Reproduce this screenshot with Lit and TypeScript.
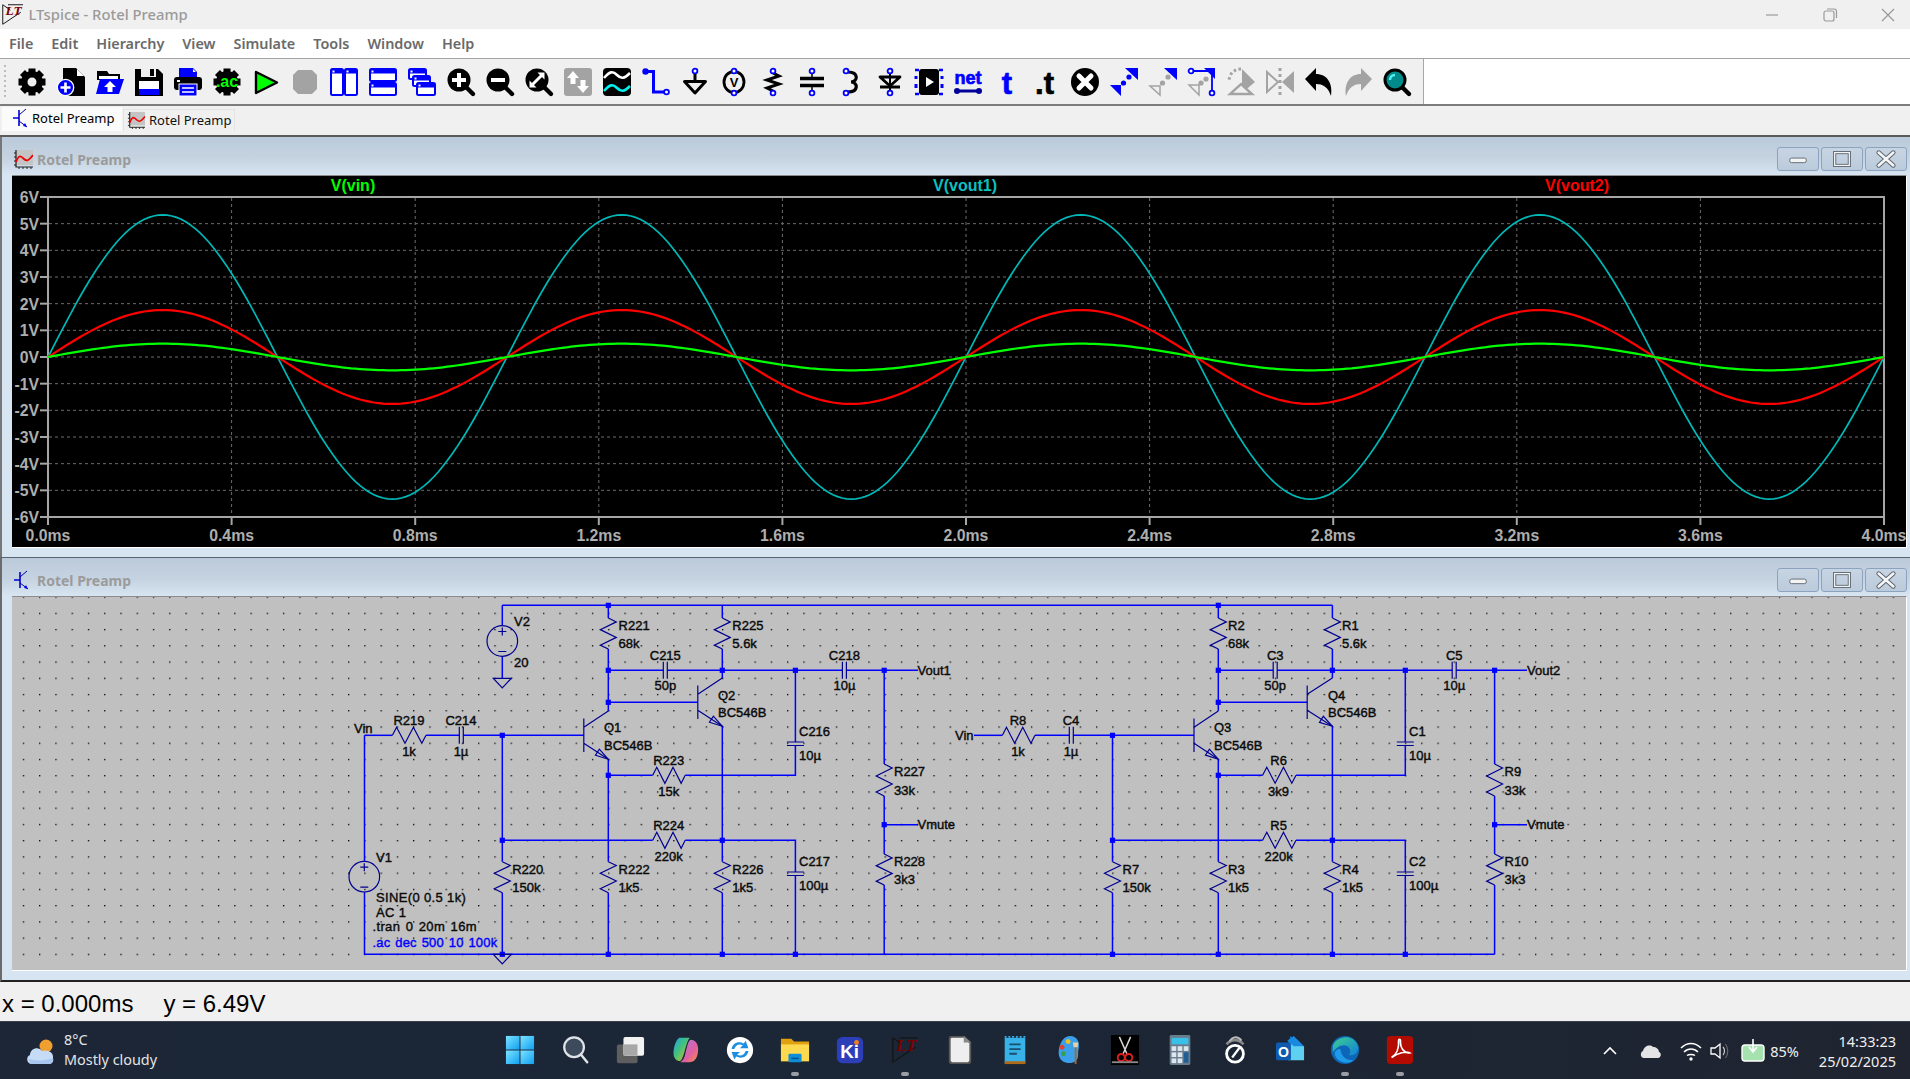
import { LitElement, html, css, svg } from "lit";
import { customElement } from "lit/decorators.js";

const K = "#000", B = "#0000ff", G = "#a3a3a3", BG = "#f0f0f0";

const gearShape = () => svg`
  ${[0, 45, 90, 135, 180, 225, 270, 315].map(a => svg`<rect x="10.5" y="0.5" width="7" height="6" fill="${K}" transform="rotate(${a} 14 14)"/>`)}
  <circle cx="14" cy="14" r="7.7" fill="none" stroke="${K}" stroke-width="6.4"/>`;
const gearSolid = () => svg`
  ${[0, 45, 90, 135, 180, 225, 270, 315].map(a => svg`<rect x="10.5" y="0.5" width="7" height="6" fill="${K}" transform="rotate(${a} 14 14)"/>`)}
  <circle cx="14" cy="14" r="11" fill="${K}"/>`;
const pin = (x: number, y: number) => svg`<circle cx="${x}" cy="${y}" r="2.4" fill="#fff" stroke="${B}" stroke-width="1.8"/>`;
const lens = (inner: unknown) => svg`
  <path d="M19 19L26 26" stroke="${K}" stroke-width="4.4" stroke-linecap="round"/>
  <circle cx="12" cy="12" r="11.5" fill="${K}"/>${inner}`;
const win = (x: number, y: number, w: number, h: number) => svg`
  <rect x="${x}" y="${y}" width="${w}" height="${h}" rx="1.5" fill="#fff" stroke="${B}" stroke-width="2"/>
  <rect x="${x}" y="${y}" width="${w}" height="4.5" fill="${B}"/>
  <rect x="${x + 1.5}" y="${y + 1.5}" width="2" height="2" fill="#fff"/>`;

const TOOLS: unknown[] = [
  gearShape(),
  svg`<path d="M6 0H19L28 9V28H6Z" fill="${K}"/><path d="M20 1L27 8H20Z" fill="#fff"/><circle cx="8.5" cy="19.5" r="8.2" fill="${B}" stroke="#fff" stroke-width="1.3"/><path d="M8.5 14.5V24.5M3.5 19.5H13.5" stroke="#fff" stroke-width="2.6"/>`,
  svg`<path d="M1 3H11L13 6H24V12H1Z" fill="${K}"/><path d="M3 8H22V11H3Z" fill="#fff"/><path d="M0 26L4 11H28L23 26Z" fill="${B}"/><path d="M14 13L20 19H16.5V24H11.5V19H8Z" fill="#fff"/>`,
  svg`<path d="M0 1H23L28 6V28H0Z" fill="${K}"/><rect x="6" y="0" width="15" height="9" fill="${BG}"/><rect x="15" y="1" width="4" height="7" fill="${K}"/><rect x="4" y="13" width="20" height="8" fill="#fff"/><rect x="4" y="21" width="20" height="6" fill="${B}"/>`,
  svg`<path d="M5 0H19L23 4V10H5Z" fill="${B}"/><path d="M19 1L22 4H19Z" fill="#fff"/><rect x="0" y="9" width="28" height="13" rx="3" fill="${K}"/><rect x="3" y="12" width="3" height="2" fill="#fff"/><rect x="5" y="16" width="18" height="12" fill="${B}" stroke="#fff"/><path d="M8 20H20M8 24H20" stroke="#fff" stroke-width="1.5"/>`,
  svg`${gearSolid()}<text x="14" y="19" class="ic-b" font-size="16" text-anchor="middle" fill="#00ff00">.ac</text>`,
  svg`<path d="M4 4L25 14.5L4 25Z" fill="#00ff00" stroke="${K}" stroke-width="2.4" stroke-linejoin="round"/>`,
  svg`<path d="M7 2H21L26 7V21L21 26H7L2 21V7Z" fill="${G}"/>`,
  svg`${win(1, 1, 12, 26)}${win(15, 1, 12, 26)}`,
  svg`${win(1, 1, 26, 12)}${win(1, 15, 26, 12)}`,
  svg`${win(1, 1, 17, 10)}${win(5, 8, 17, 10)}${win(9, 15, 18, 12)}`,
  lens(svg`<path d="M12 5V19M5 12H19" stroke="#fff" stroke-width="4"/>`),
  lens(svg`<path d="M5 12H19" stroke="#fff" stroke-width="4"/>`),
  lens(svg`<path d="M6 18L18 6" stroke="#fff" stroke-width="3"/><path d="M4.5 12.5V19.5H11.5ZM12.5 4.5H19.5V11.5Z" fill="#fff"/>`),
  svg`<rect width="28" height="28" rx="3" fill="${G}"/><path d="M9 3L15 10H11.5V16H6.5V10H3ZM19 25L13 18H16.5V12H21.5V18H25Z" fill="#fff"/>`,
  svg`<rect width="28" height="28" rx="4" fill="${K}"/><path d="M1 10C7 3 10 3 14 7S21 11 27 5" fill="none" stroke="#fff" stroke-width="2.6"/><path d="M1 23C7 16 10 16 14 20S21 24 27 18" fill="none" stroke="#00f0f0" stroke-width="2.6"/>`,
  svg`<path d="M4 3.5H11.5V24H22" fill="none" stroke="${B}" stroke-width="3"/><circle cx="3.5" cy="3.5" r="3.2" fill="${B}"/>${pin(24.5, 24)}`,
  svg`<path d="M14 5V12" stroke="${K}" stroke-width="3"/><path d="M3.5 13.5H24.5L14 25Z" fill="none" stroke="${K}" stroke-width="3" stroke-linejoin="round"/>${pin(14, 3)}`,
  svg`<ellipse cx="14" cy="14" rx="10" ry="10.5" fill="none" stroke="${K}" stroke-width="2.8"/><text x="14" y="19" class="ic-b" font-size="13" text-anchor="middle" fill="${K}">V</text>${pin(14, 3)}${pin(14, 25)}`,
  svg`<path d="M14 5L20 8L8 12L20 16L8 20L14 23" fill="none" stroke="${K}" stroke-width="3"/>${pin(14, 3)}${pin(14, 25)}`,
  svg`<path d="M14 5V11M14 17V23" stroke="${K}" stroke-width="1.5"/><path d="M2 10.5H26M2 17.5H26" stroke="${K}" stroke-width="3.4"/>${pin(14, 3)}${pin(14, 25)}`,
  svg`<path d="M11 4C22 4 21 14 14 14C21 14 22 24 11 24" fill="none" stroke="${K}" stroke-width="3.2"/>${pin(9, 3)}${pin(9, 25)}`,
  svg`<path d="M14 5V23" stroke="${K}" stroke-width="2"/><path d="M4 9H24L14 18Z" fill="none" stroke="${K}" stroke-width="2.8" stroke-linejoin="round"/><path d="M4 19H24" stroke="${K}" stroke-width="3"/>${pin(14, 3)}${pin(14, 25)}`,
  svg`<rect x="4" y="1" width="20" height="26" rx="3" fill="${K}"/><path d="M11 9L19 14L11 19Z" fill="#fff"/><path d="M0 2H4M24 2H28M0 26H4M24 26H28" stroke="${B}" stroke-width="2.4"/><path d="M1 8V11M27 8V11M1 16V20M27 16V20" stroke="${B}" stroke-width="3"/>`,
  svg`<text x="14" y="15.5" class="ic-b ic-h" font-size="18" text-anchor="middle" fill="${B}" stroke="${B}">net</text><path d="M3 23H25" stroke="#00009a" stroke-width="3"/><circle cx="3" cy="23" r="3" fill="#00009a"/><circle cx="25" cy="23" r="3" fill="#00009a"/>`,
  svg`<text x="14" y="26" class="ic-b ic-h" font-size="31" text-anchor="middle" fill="${B}" stroke="${B}">t</text>`,
  svg`<text x="12.5" y="26" class="ic-b ic-h" font-size="31" text-anchor="middle" fill="${K}" stroke="${K}">.t</text>`,
  svg`<circle cx="14" cy="14" r="14" fill="${K}"/><path d="M8 8L20 20M20 8L8 20" stroke="#fff" stroke-width="5" stroke-linecap="round"/>`,
  svg`<path d="M15 0H28V12Z M0 17H11V28Z" fill="${B}"/><circle cx="19" cy="9" r="2.6" fill="${B}"/><circle cx="13.5" cy="15" r="2.6" fill="${B}"/><circle cx="8" cy="20" r="1.5" fill="${B}"/>`,
  svg`<path d="M15 0H28V12Z" fill="${B}"/><path d="M1 18H11V27Z" fill="none" stroke="${G}" stroke-width="1.5"/><circle cx="19" cy="9" r="2.6" fill="${G}"/><circle cx="13.5" cy="15" r="2.6" fill="${G}"/>`,
  svg`<path d="M16 0H27V11Z" fill="${B}"/><path d="M3 3H24V24" fill="none" stroke="${B}" stroke-width="1.8"/>${pin(3, 3)}${pin(24, 25)}<path d="M1 17H11V27Z" fill="none" stroke="${G}" stroke-width="1.5"/><circle cx="18" cy="11" r="2.6" fill="${G}"/><circle cx="13" cy="15" r="2.6" fill="${G}"/>`,
  svg`<path d="M15 1L28 14L15 25Z" fill="${G}"/><path d="M3 26H25L14 16Z" fill="${BG}" stroke="${G}" stroke-width="2.4"/><path d="M14 1C7 1 2 6 2 14" fill="none" stroke="${G}" stroke-width="3" stroke-dasharray="2.5 2.5"/>`,
  svg`<path d="M16 14L28 3V25Z" fill="${G}"/><path d="M12 14L1 4V24Z" fill="none" stroke="${G}" stroke-width="2"/><path d="M14 0V28" stroke="${G}" stroke-width="3" stroke-dasharray="3 3"/>`,
  svg`<path d="M0 11L11 0V6C22 6 28 15 26 28C23 19 18 16 11 16V23Z" fill="${K}"/>`,
  svg`<path d="M28 11L17 0V6C6 6 0 15 2 28C5 19 10 16 17 16V23Z" fill="${G}"/>`,
  svg`<path d="M19 19L26 26" stroke="${K}" stroke-width="4.4" stroke-linecap="round"/><circle cx="12" cy="12" r="10" fill="#008b8b" stroke="${K}" stroke-width="3"/><path d="M7 12C7 9 9 7 12 7" fill="none" stroke="#50f0f0" stroke-width="2.4"/>`,
];

const LOGO = svg`<path d="M1 1L11 8M1 1V27L25 11M8 1H28" fill="none" stroke="#151515" stroke-width="1.3"/><text x="15.5" y="15" class="ic-lt" font-size="18" text-anchor="middle" fill="#7a0000">LT</text>`;
const TRANS = svg`<path d="M7 2V18M1 10H7" stroke="#0000d0" stroke-width="1.6" fill="none"/><path d="M7 7L14 1M7 13L15 19" stroke="#0000a0" fill="none"/><path d="M15 19L11 18L13 15Z" fill="#0000ff"/>`;
const PLOTIC = svg`<rect x="3" y="1" width="17" height="15" fill="#c4c4c4"/><path d="M3 1V18H20" fill="none" stroke="#222" stroke-width="1.2"/><path d="M1 4H3M1 8H3M1 12H3M1 16H3M6 18V20M10 18V20M14 18V20M18 18V20" stroke="#222"/><path d="M3 13C6 5 8 7 11 10S16 11 20 6" fill="none" stroke="#f00000" stroke-width="1.8"/>`;

const TASK: { s: unknown; run?: boolean }[] = [
  { s: svg`<defs><linearGradient id="wg" x1="0" y1="0" x2="1" y2="1"><stop offset="0" stop-color="#7ce4ff"/><stop offset="1" stop-color="#0f9ff2"/></linearGradient></defs><rect x="1" y="1" width="14.5" height="14.5" fill="url(#wg)"/><rect x="16.5" y="1" width="14.5" height="14.5" fill="url(#wg)"/><rect x="1" y="16.5" width="14.5" height="14.5" fill="url(#wg)"/><rect x="16.5" y="16.5" width="14.5" height="14.5" fill="url(#wg)"/>` },
  { s: svg`<circle cx="15" cy="13" r="10.5" fill="#3c4a5c" stroke="#dfe4e8" stroke-width="2.4"/><path d="M22.5 21L29 29" stroke="#dfe4e8" stroke-width="2.6" stroke-linecap="round"/>` },
  { s: svg`<rect x="2" y="10" width="22" height="20" rx="2" fill="#5e5e5e"/><rect x="9" y="2" width="22" height="20" rx="2" fill="#f2f2f2"/><rect x="9" y="10" width="15" height="12" fill="#a8a8a8"/>` },
  { s: svg`<defs><linearGradient id="cg" x1="0" y1="0" x2="1" y2="1"><stop offset="0" stop-color="#19a7e8"/><stop offset=".45" stop-color="#46c07a"/><stop offset="1" stop-color="#e8c020"/></linearGradient><linearGradient id="cg2" x1="0" y1="0" x2="1" y2="1"><stop offset="0" stop-color="#a77be8"/><stop offset=".6" stop-color="#e060a0"/><stop offset="1" stop-color="#f89040"/></linearGradient></defs><path d="M10 3H21C17 8 16 20 12 27C9 29 5 26 4 22C3 15 6 5 10 3Z" fill="url(#cg)"/><path d="M22 5C26 5 30 8 30 15C30 23 27 29 21 29H11C16 26 16 20 18 13C19 9 20 6 22 5Z" fill="url(#cg2)"/>` },
  { s: svg`<circle cx="16" cy="16" r="14" fill="#fff"/><path d="M7 15C8 9 14 6 20 9L22 6L25 14L16 14L19 11C15 9 11 11 10 15Z" fill="#1d8fe0"/><path d="M25 17C24 23 18 26 12 23L10 26L7 18L16 18L13 21C17 23 21 21 22 17Z" fill="#1d8fe0"/>` },
  { s: svg`<path d="M1 4H12L15 7H31V28H1Z" fill="#e0a010"/><path d="M1 10H31V28H1Z" fill="#fcd94f"/><rect x="9" y="20" width="14" height="9" rx="1.5" fill="#0f8ed8"/><path d="M12 25H20" stroke="#0a4f90" stroke-width="1.5"/>`, run: true },
  { s: svg`<rect x="2" y="2" width="28" height="28" rx="6" fill="#2c3fb8"/><text x="15.5" y="24" class="ic-b" font-size="20" text-anchor="middle" fill="#fff">Ki</text><circle cx="23" cy="8" r="2.6" fill="#f08020"/>` },
  { s: svg`<g transform="translate(2 2)">${LOGO}</g>`, run: true },
  { s: svg`<path d="M6 1H21L28 8V28C28 30 27 31 25 31H7C5 31 4 30 4 28V3C4 2 5 1 6 1Z" fill="#555"/><path d="M7 3H20L26 9V27C26 28 25 29 24 29H8C7 29 6 28 6 27V4Z" fill="#eee"/><path d="M20 1L28 8H20Z" fill="#888"/>` },
  { s: svg`<rect x="5" y="3" width="22" height="27" fill="#38b0e8"/><rect x="5" y="28" width="22" height="3" fill="#b06a18"/><path d="M5 2H27" stroke="#38b0e8" stroke-width="2" stroke-dasharray="2 2"/><path d="M10 10H22M10 15H22M10 20H18" stroke="#16506e" stroke-width="2"/>` },
  { s: svg`<path d="M16 1C24 1 27 8 25 16C24 20 26 24 22 28C18 31 8 31 5 24C2 17 6 1 16 1Z" fill="#3aa0ec"/><circle cx="14" cy="7" r="2.6" fill="#f0c020"/><circle cx="7.5" cy="13" r="2.6" fill="#e04030"/><circle cx="9" cy="20" r="2.6" fill="#34a050"/><path d="M22 12V31" stroke="#a06a30" stroke-width="2"/><path d="M19 8H25L24 13H20Z" fill="#e8d0a0"/>` },
  { s: svg`<rect x="1" y="0" width="30" height="32" fill="#000"/><path d="M10 2L18 20M22 2L14 20" stroke="#d8d8d8" stroke-width="1.6"/><circle cx="12" cy="24" r="3.8" fill="none" stroke="#e02020" stroke-width="2"/><circle cx="20" cy="24" r="3.8" fill="none" stroke="#e02020" stroke-width="2"/><rect x="2" y="28" width="28" height="2" fill="#888"/>` },
  { s: svg`<rect x="5" y="0" width="22" height="32" rx="1.5" fill="#6a7c8c"/><rect x="7" y="3" width="18" height="7" fill="#38c0e8"/><rect x="7" y="12" width="5" height="5" fill="#dbe6ee"/><rect x="13.5" y="12" width="5" height="5" fill="#dbe6ee"/><rect x="20" y="12" width="5" height="5" fill="#dbe6ee"/><rect x="7" y="18.5" width="5" height="5" fill="#dbe6ee"/><rect x="13.5" y="18.5" width="5" height="5" fill="#dbe6ee"/><rect x="20" y="18.5" width="5" height="11" fill="#1f5f96"/><rect x="7" y="25" width="5" height="5" fill="#dbe6ee"/><rect x="13.5" y="25" width="5" height="5" fill="#dbe6ee"/>` },
  { s: svg`<circle cx="16" cy="20" r="9" fill="none" stroke="#fff" stroke-width="3"/><path d="M13 24L22 12" stroke="#fff" stroke-width="2.4"/><path d="M7 10C12 4 20 4 25 10" fill="none" stroke="#888" stroke-width="3"/><path d="M10 7C14 1 19 1 23 6" fill="none" stroke="#bbb" stroke-width="2"/>` },
  { s: svg`<path d="M16 1L28 9V26H14Z" fill="#1272c8"/><path d="M14 8L31 12V27H14Z" fill="#5ed0f0"/><path d="M20 1L31 12H20L13 6Z" fill="#1a8ae0"/><rect x="1" y="8" width="16" height="19" rx="2" fill="#0e5bb0"/><text x="9" y="23" class="ic-b" font-size="15" text-anchor="middle" fill="#fff">O</text>` },
  { s: svg`<defs><linearGradient id="eg" x1="0" y1="0" x2="1" y2="1"><stop offset="0" stop-color="#3ccf90"/><stop offset="1" stop-color="#1080d8"/></linearGradient></defs><circle cx="16" cy="16" r="15" fill="#0d66b8"/><path d="M3 12C6 2 24 -3 30 12C31 20 24 23 20 21C24 17 20 11 15 11C10 11 7 14 3 18Z" fill="url(#eg)"/><path d="M5 20C6 28 18 33 25 27C18 27 12 24 11 15C8 15 5 17 5 20Z" fill="#1e9ae8"/>`, run: true },
  { s: svg`<rect x="2" y="1" width="28" height="30" rx="4" fill="#b30b00"/><path d="M7 24C12 21 15 14 14.5 6C14.5 4 16.5 4 16.5 6C16 14 21 20 26 19C22 17 14 19 7 24Z" fill="none" stroke="#fff" stroke-width="1.8"/>`, run: true },
];

const sines = [
  { a: 5.33, c: "#00b8b8", w: 1.7 },
  { a: 1.76, c: "#ff0000", w: 2.2 },
  { a: 0.5, c: "#00ff00", w: 2.2 },
];
const PX = (t: number) => 48 + (t / 4) * 1836;
const PY = (v: number) => 357 - v * 26.667;

const PLOT = (() => {
  const lines = sines.map(s => {
    const pts: string[] = [];
    for (let t = 0; t <= 4.0001; t += 0.01) pts.push(`${PX(t).toFixed(1)},${PY(s.a * Math.sin(2 * Math.PI * t)).toFixed(1)}`);
    return svg`<polyline points="${pts.join(" ")}" fill="none" stroke="${s.c}" stroke-width="${s.w}" stroke-linejoin="round"/>`;
  });
  const vs: unknown[] = [], hs: unknown[] = [];
  for (let i = 0; i <= 10; i++) {
    const x = PX(i * 0.4);
    if (i > 0 && i < 10) vs.push(svg`<line x1="${x}" x2="${x}" y1="198" y2="516" class="grid"/>`);
    vs.push(svg`<line x1="${x}" x2="${x}" y1="517" y2="525" class="axis"/>`);
    vs.push(svg`<text x="${x}" y="540.5" text-anchor="middle" class="tick">${(i * 0.4).toFixed(1)}ms</text>`);
  }
  for (let v = -6; v <= 6; v++) {
    const y = PY(v);
    if (Math.abs(v) < 6) hs.push(svg`<line x1="49" x2="1883" y1="${y}" y2="${y}" class="grid"/>`);
    hs.push(svg`<line x1="40" x2="48" y1="${y}" y2="${y}" class="axis"/>`);
    hs.push(svg`<text x="39" y="${y + 6}" text-anchor="end" class="tick">${v}V</text>`);
  }
  return svg`${vs}${hs}
    <rect x="48" y="197" width="1836" height="320" fill="none" class="axis"/>
    ${lines}
    <text x="353" y="190.5" text-anchor="middle" class="trace" fill="#00ff00">V(vin)</text>
    <text x="965" y="190.5" text-anchor="middle" class="trace" fill="#0cc0c0">V(vout1)</text>
    <text x="1577" y="190.5" text-anchor="middle" class="trace" fill="#ff0000">V(vout2)</text>`;
})();

type P = [number, number];
const wire = (...p: P[]) => svg`<polyline points="${p.map(q => q.join(",")).join(" ")}" class="wire"/>`;
const dot = (x: number, y: number) => svg`<rect x="${x - 2.6}" y="${y - 2.6}" width="5.2" height="5.2" fill="${B}"/>`;
const rv = (x: number, y0: number, y1: number) => {
  const L = y1 - y0;
  const f: P[] = [[0, 0], [8, .125], [-8, .375], [8, .625], [-8, .875], [0, 1]];
  return svg`<polyline class="sym" points="${f.map(([d, k]) => `${x + d},${y0 + k * L}`).join(" ")}"/>`;
};
const rh = (x0: number, x1: number, y: number) => {
  const L = x1 - x0;
  const f: P[] = [[0, 0], [.125, -8], [.375, 8], [.625, -8], [.875, 8], [1, 0]];
  return svg`<polyline class="sym" points="${f.map(([k, d]) => `${x0 + k * L},${y + d}`).join(" ")}"/>`;
};
const ch = (x: number, y: number) => svg`<path class="sym" d="M${x - 2} ${y - 8.5}V${y + 8.5}M${x + 2} ${y - 8.5}V${y + 8.5}"/>`;
const cv = (x: number, y0: number) => svg`<path class="sym" d="M${x - 8.5} ${y0}H${x + 8.5}M${x - 8.5} ${y0 + 3.5}H${x + 8.5}"/>`;
const npn = (b: number, y: number, c: number) => {
  const ey = y + 24, ex = c, sx = b, sy = y + 8;
  const dx = ex - sx, dy = ey - sy, l = Math.hypot(dx, dy), ux = dx / l, uy = dy / l;
  const bx = ex - 13 * ux, by = ey - 13 * uy;
  return svg`<path class="sym" d="M${b} ${y - 16.7}V${y + 16.7}M${b} ${y - 8}L${c} ${y - 24.3}M${sx} ${sy}L${ex} ${ey}"/>
    <polygon class="sym" points="${ex},${ey} ${bx - uy * 3.6},${by + ux * 3.6} ${bx + uy * 3.6},${by - ux * 3.6}"/>`;
};
const src = (x: number, y: number) => svg`<circle class="sym" cx="${x}" cy="${y}" r="15.3"/><path class="sym" d="M${x - 4} ${y - 9.5}H${x + 4}M${x} ${y - 13.5}V${y - 5.5}M${x - 4} ${y + 10.5}H${x + 4}"/>`;
const gnd = (x: number, y: number) => svg`<polygon class="sym" points="${x - 9},${y} ${x + 9},${y} ${x},${y + 9.5}"/>`;

interface Cfg { xb: number; c1: number; b1: number; c2: number; b2: number; r0: number; r1: number; cf: number; xc: number; co: number; xo: number; xl: number; }
const Y = { top: 605.3, y1: 670.3, y2: 702.3, y3: 735.3, y4: 775.3, y5: 840.3, y6: 824.7, bot: 954.3 };
const block = (c: Cfg) => svg`
  ${wire([c.c1, Y.top], [c.c1, 618])}${wire([c.c1, 649], [c.c1, 710.9])}
  ${wire([c.c2, Y.top], [c.c2, 618])}${wire([c.c2, 649], [c.c2, 678])}
  ${wire([c.c1, Y.y1], [c.cf - 2, Y.y1])}${wire([c.cf + 2, Y.y1], [c.co - 2, Y.y1])}${wire([c.co + 2, Y.y1], [c.xl, Y.y1])}
  ${wire([c.c1, Y.y2], [c.b2, Y.y2])}${wire([c.xb, Y.y3], [c.b1, Y.y3])}
  ${wire([c.c1, 759.3], [c.c1, 861.7])}${wire([c.c1, 892.7], [c.c1, Y.bot])}
  ${wire([c.c2, 726.3], [c.c2, 861.7])}${wire([c.c2, 892.7], [c.c2, Y.bot])}
  ${wire([c.c1, Y.y4], [c.r0, Y.y4])}${wire([c.r1, Y.y4], [c.xc, Y.y4], [c.xc, 745.5])}${wire([c.xc, Y.y1], [c.xc, 742])}
  ${wire([c.xb, Y.y5], [c.r0, Y.y5])}${wire([c.r1, Y.y5], [c.xc, Y.y5], [c.xc, 872])}${wire([c.xc, 875.5], [c.xc, Y.bot])}
  ${wire([c.xb, Y.y3], [c.xb, 861.7])}${wire([c.xb, 892.7], [c.xb, Y.bot])}
  ${wire([c.xo, Y.y1], [c.xo, 764])}${wire([c.xo, 796], [c.xo, 854])}${wire([c.xo, 885], [c.xo, Y.bot])}
  ${wire([c.xo, Y.y6], [c.xl, Y.y6])}
  ${rv(c.c1, 618, 649)}${rv(c.c2, 618, 649)}${rv(c.c1, 861.7, 892.7)}${rv(c.c2, 861.7, 892.7)}${rv(c.xb, 861.7, 892.7)}
  ${rv(c.xo, 764, 796)}${rv(c.xo, 854, 885)}
  ${rh(c.r0, c.r1, Y.y4)}${rh(c.r0, c.r1, Y.y5)}
  ${ch(c.cf, Y.y1)}${ch(c.co, Y.y1)}${cv(c.xc, 742)}${cv(c.xc, 872)}
  ${npn(c.b1, Y.y3, c.c1)}${npn(c.b2, Y.y2, c.c2)}
  ${[[c.c1, Y.top], [c.c1, Y.y1], [c.c2, Y.y1], [c.xc, Y.y1], [c.xo, Y.y1], [c.c1, Y.y2], [c.xb, Y.y3], [c.c1, Y.y4], [c.xb, Y.y5], [c.c2, Y.y5], [c.xo, Y.y6],
     [c.xb, Y.bot], [c.c1, Y.bot], [c.c2, Y.bot], [c.xc, Y.bot]].map(p => dot(p[0], p[1]))}`;

const A: Cfg = { xb: 502.3, c1: 608.3, b1: 583.8, c2: 722.3, b2: 697.8, r0: 652.7, r1: 685.2, cf: 665.3, xc: 795.4, co: 844.4, xo: 884.2, xl: 918 };
const D: Cfg = { xb: 1112.5, c1: 1218.3, b1: 1194, c2: 1332.4, b2: 1307.2, r0: 1262.6, r1: 1296, cf: 1275.2, xc: 1405.3, co: 1454.2, xo: 1494.6, xl: 1527 };

type L = [string, number, number, boolean?];
const LABELS: L[] = [
  ["R221", 618.6, 625.7], ["68k", 618.6, 643.7], ["R225", 732.3, 625.7], ["5.6k", 732.3, 643.7],
  ["C215", 665.3, 655.7, true], ["50p", 665.3, 685.7, true], ["C218", 844.4, 655.7, true], ["10µ", 844.4, 685.7, true],
  ["V2", 514, 621.7], ["20", 514, 662.7], ["Vout1", 917.5, 670.3], ["Q2", 718, 695], ["BC546B", 718, 712.7],
  ["Q1", 604, 727.7], ["BC546B", 604, 745.7], ["Vin", 354, 728.7], ["R219", 409, 720.7, true], ["1k", 409, 751, true],
  ["C214", 461, 720.7, true], ["1µ", 461, 751, true], ["C216", 799, 731.7], ["10µ", 799, 755.7],
  ["R223", 668.7, 760.7, true], ["15k", 668.7, 791.3, true], ["R224", 668.7, 825.7, true], ["220k", 668.7, 856.7, true],
  ["R227", 894, 771.7], ["33k", 894, 790.7], ["Vmute", 917.5, 824.7], ["R228", 894, 861.7], ["3k3", 894, 879.7],
  ["V1", 376, 857.7], ["R220", 512.2, 869.3], ["150k", 512.2, 887.7], ["R222", 618.6, 869.3], ["1k5", 618.6, 887.7],
  ["R226", 732.3, 869.3], ["1k5", 732.3, 887.7], ["C217", 799, 861.7], ["100µ", 799, 885.7],
  ["R2", 1228, 625.7], ["68k", 1228, 643.7], ["R1", 1342, 625.7], ["5.6k", 1342, 643.7],
  ["C3", 1275.2, 655.7, true], ["50p", 1275.2, 685.7, true], ["C5", 1454.2, 655.7, true], ["10µ", 1454.2, 685.7, true],
  ["Vout2", 1527, 670.3], ["Q4", 1328, 695], ["BC546B", 1328, 712.7], ["Q3", 1214, 727.7], ["BC546B", 1214, 745.7],
  ["Vin", 955, 735.3], ["R8", 1018, 720.7, true], ["1k", 1018, 751, true], ["C4", 1071, 720.7, true], ["1µ", 1071, 751, true],
  ["C1", 1409, 731.7], ["10µ", 1409, 755.7], ["R6", 1278.6, 760.7, true], ["3k9", 1278.6, 791.3, true],
  ["R5", 1278.6, 825.7, true], ["220k", 1278.6, 856.7, true], ["R9", 1504.6, 771.7], ["33k", 1504.6, 790.7],
  ["Vmute", 1527, 824.7], ["R10", 1504.6, 861.7], ["3k3", 1504.6, 879.7], ["R7", 1122.5, 869.3], ["150k", 1122.5, 887.7],
  ["R3", 1228, 869.3], ["1k5", 1228, 887.7], ["R4", 1342, 869.3], ["1k5", 1342, 887.7], ["C2", 1409, 861.7], ["100µ", 1409, 885.7],
];

const SCHEM = svg`
  <defs><pattern id="dots" x="348" y="612.7" width="16.26" height="16.24" patternUnits="userSpaceOnUse"><rect width="1.3" height="1.3" fill="#000"/></pattern></defs>
  <rect x="12" y="596" width="1895" height="374" fill="url(#dots)"/>
  ${wire([502.3, Y.top], [1332.4, Y.top])}
  ${wire([364.5, Y.y3], [364.5, 861.5])}${wire([364.5, 892], [364.5, Y.bot], [1494.6, Y.bot])}
  ${wire([502.3, Y.top], [502.3, 626])}${wire([502.3, 656], [502.3, 678])}
  ${wire([364.5, Y.y3], [392.4, Y.y3])}${wire([426, Y.y3], [459.3, Y.y3])}${wire([463.3, Y.y3], [502.3, Y.y3])}
  ${wire([974, Y.y3], [1002.4, Y.y3])}${wire([1035, Y.y3], [1069.3, Y.y3])}${wire([1073.3, Y.y3], [1112.5, Y.y3])}
  ${block(A)}${block(D)}
  ${src(364.3, 876.7)}${src(502.3, 641)}${gnd(502.3, 678.3)}${gnd(502.3, 954.3)}
  ${rh(392.4, 426, Y.y3)}${ch(461.3, Y.y3)}${rh(1002.4, 1035, Y.y3)}${ch(1071.3, Y.y3)}
  ${LABELS.map(([t, x, y, c]) => svg`<text x="${x}" y="${y + 4.6}" class="lbl" text-anchor="${c ? "middle" : "start"}">${t}</text>`)}
  <text x="376" y="902.3" class="lbl note">SINE(0 0.5 1k)</text>
  <text x="376" y="917.3" class="lbl note">AC 1</text>
  <text x="372.5" y="931.3" class="lbl note wide">.tran 0 20m 16m</text>
  <text x="372.5" y="947.3" class="lbl dir">.ac dec 500 10 100k</text>`;

const winBtns = html`<div class="wbtns">
  <div class="wbtn"><svg viewBox="0 0 42 24" width="40" height="22"><rect x="12" y="11" width="18" height="5" rx="2" fill="#f4f4f4" stroke="#5c6670"/></svg></div>
  <div class="wbtn"><svg viewBox="0 0 42 24" width="40" height="22"><rect x="13" y="5" width="16" height="14" fill="none" stroke="#5c6670" stroke-width="3.4"/><rect x="13" y="5" width="16" height="14" fill="none" stroke="#f4f4f4" stroke-width="1.4"/></svg></div>
  <div class="wbtn"><svg viewBox="0 0 42 24" width="40" height="22"><path d="M13 5L29 19M29 5L13 19" stroke="#5c6670" stroke-width="5" stroke-linecap="round"/><path d="M13 5L29 19M29 5L13 19" stroke="#f6f6f6" stroke-width="2.8" stroke-linecap="round"/></svg></div>
</div>`;

@customElement("app-root")
export class AppRoot extends LitElement {
  static styles = css`
    :host { display: flex; flex-direction: column; width: 1910px; height: 1079px; overflow: hidden; background: #f0f0f0; font-family: "Noto Sans", "Open Sans", sans-serif; color: #000; }
    svg { display: block; }
    .ic-b { font-family: "Liberation Sans", sans-serif; font-weight: 700; }
    .ic-h { stroke-width: 0.7; }
    .ic-lt { font-family: "Liberation Serif", serif; font-weight: 700; font-style: italic; }

    .titlebar { height: 29px; flex: none; display: flex; align-items: center; background: #f0f0f0; }
    .applogo { margin-left: 2px; }
    .apptitle { margin: -2px 0 0 5.5px; font-size: 14.8px; color: #9a9a9a; font-weight: 500; white-space: nowrap; }
    .spacer { flex: 1; }
    .sysbtns { display: flex; gap: 40px; padding-right: 13px; }

    .menubar { height: 30px; flex: none; box-sizing: border-box; border-bottom: 1px solid #a4a4a4; background: #fff; display: flex; align-items: center; gap: 18px; padding-left: 9px; font-size: 14.4px; font-weight: 600; color: #6a6a6a; }

    .toolrow { height: 47px; flex: none; box-sizing: border-box; border-bottom: 2px solid #7d7d7d; background: #fff; display: flex; }
    .toolbar { width: 1424px; box-sizing: border-box; border-right: 1px solid #a8a8a8; background: #f0f0f0; display: flex; align-items: center; padding-top: 1px; position: relative; }
    .grip { width: 2px; height: 34px; margin-left: 4px; margin-right: 6.5px; background: repeating-linear-gradient(#bdbdbd 0 2px, transparent 2px 5px); }
    .slot { width: 39px; display: flex; justify-content: center; flex: none; }
    .slot svg { overflow: visible; }

    .tabs { height: 31px; flex: none; box-sizing: border-box; background: #f0f0f0; border-bottom: 2px solid #5a5a5a; display: flex; align-items: flex-end; padding: 0 0 4px 2px; gap: 1px; font-size: 13px; white-space: nowrap; }
    .tab { display: flex; align-items: center; box-sizing: border-box; }
    .tab.on { width: 120px; height: 24px; background: #fbfbfb; padding-left: 10px; gap: 2px; padding-bottom: 3px; }
    .tab.off { width: 112px; height: 22px; border: 1px solid #e4e4e4; border-bottom: 0; padding: 0 0 1px 3px; gap: 4px; color: #111; }

    .mdi { flex: 1; display: flex; flex-direction: column; min-height: 0; }
    .win { display: flex; flex-direction: column; box-sizing: border-box; background: #d7e4f2; border-left: 2px solid #6a6a6a; }
    .win.w1 { height: 420px; border-left-color: #777; padding-bottom: 9px; }
    .win.w2 { height: 425px; border-top: 1px solid #59636d; border-bottom: 2px solid #222; padding-bottom: 9px; }
    .wtitle { height: 38px; flex: none; display: flex; align-items: flex-start; background: linear-gradient(#bbcada, #c5d3e1 55%, #d7e5f3); padding-left: 11px; box-sizing: border-box; }
    .wicon { margin-top: 12px; }
    .wname { margin: 13px 0 0 4px; font-size: 14px; font-weight: 700; color: #9b9b9b; line-height: 20px; white-space: nowrap; }
    .wbtns { margin-left: auto; margin-top: 10px; padding-right: 3px; display: flex; gap: 2px; }
    .wbtn { width: 42px; height: 24px; box-sizing: border-box; border: 1px solid #8ca3bf; border-radius: 3px; background: linear-gradient(#c6d4e3, #bccbdb); }
    .pane { margin: 0 3px 0 10px; flex: 1; min-height: 0; border-right: 1px solid #fff; border-bottom: 1px solid #fff; }
    .pane.plot { background: #000; border-top: 1px solid #8b8b8b; }
    .pane.sch { background: #c0c0c0; border-top: 1px solid #8b8b8b; }
    .pane svg { width: 100%; height: 100%; }
    .grid { stroke: #6d6d6d; stroke-width: 1; stroke-dasharray: 3 3; }
    .axis { stroke: #a6a6a6; stroke-width: 2; }
    .tick { font: 700 15.8px "Liberation Sans", sans-serif; fill: #aeaeae; }
    .trace { font: 700 16px "Liberation Sans", sans-serif; }
    .wire { fill: none; stroke: #0000ff; stroke-width: 1.5; }
    .sym { fill: none; stroke: #000090; stroke-width: 1.2; }
    .lbl { font: 13px "Liberation Sans", sans-serif; fill: #0a0a0a; stroke: #0a0a0a; stroke-width: 0.4; }
    .lbl.note { letter-spacing: 0.35px; }
    .lbl.wide { word-spacing: 1.5px; }
    .lbl.dir { fill: #0000ff; stroke: #0000ff; letter-spacing: 0.2px; word-spacing: 1px; }

    .status { height: 39px; flex: none; display: flex; align-items: center; gap: 30px; padding: 4px 0 0 2px; font: 24px "Liberation Sans", sans-serif; background: #f0f0f0; box-sizing: border-box; }

    .taskbar { height: 58px; flex: none; display: grid; grid-template-columns: 492.5px 935px 1fr; background: linear-gradient(90deg, #1c2637, #1b2636 50%, #1f2430); color: #fff; box-sizing: border-box; border-top: 1px solid #3a414c; }
    .weather { display: flex; align-items: center; padding-left: 26px; gap: 10px; }
    .wtxt { display: flex; flex-direction: column; font-size: 14.4px; line-height: 20px; color: #e4e4e4; padding-bottom: 1px; white-space: nowrap; }
    .apps { display: flex; }
    .app { width: 55px; flex: none; display: flex; justify-content: center; align-items: center; position: relative; padding-bottom: 2px; box-sizing: border-box; }
    .app.run::after { content: ""; position: absolute; left: 23.5px; bottom: 3px; width: 8px; height: 4px; border-radius: 2px; background: #9a9ea4; }
    .tray { display: flex; align-items: center; justify-content: flex-end; padding-right: 14px; font-size: 14.5px; }
    .t-chev { margin-right: 21px; }
    .t-cloud { margin-right: 16px; }
    .t-wifi { margin-right: 6.4px; }
    .t-spk { margin-right: 12px; }
    .t-bat { margin-right: 5px; }
    .pct { margin-right: 20px; color: #f0f0f0; }
    .clock { text-align: right; line-height: 20px; color: #f0f0f0; white-space: nowrap; }
  `;

  render() {
    return html`
      <div class="titlebar">
        <svg class="applogo" width="21" height="21" viewBox="0 0 28 28">${LOGO}</svg>
        <div class="apptitle">LTspice - Rotel Preamp</div>
        <div class="spacer"></div>
        <div class="sysbtns">
          <svg width="18" height="18" viewBox="0 0 18 18"><path d="M3 9H15" stroke="#999" stroke-width="1.2"/></svg>
          <svg width="18" height="18" viewBox="0 0 18 18"><rect x="3" y="5" width="10" height="10" rx="2" fill="none" stroke="#999" stroke-width="1.2"/><path d="M6 3H13C14.5 3 15.5 4 15.5 5.5V12" fill="none" stroke="#999" stroke-width="1.2"/></svg>
          <svg width="18" height="18" viewBox="0 0 18 18"><path d="M3 3L15 15M15 3L3 15" stroke="#999" stroke-width="1.2"/></svg>
        </div>
      </div>
      <div class="menubar">${["File", "Edit", "Hierarchy", "View", "Simulate", "Tools", "Window", "Help"].map(m => html`<div>${m}</div>`)}</div>
      <div class="toolrow">
        <div class="toolbar">
          <div class="grip"></div>
          ${TOOLS.map(t => html`<div class="slot"><svg width="28" height="28" viewBox="0 0 28 28">${t}</svg></div>`)}
        </div>
      </div>
      <div class="tabs">
        <div class="tab on"><svg width="18" height="20" viewBox="0 0 18 20">${TRANS}</svg><span>Rotel Preamp</span></div>
        <div class="tab off"><svg width="18" height="18" viewBox="0 0 20 20">${PLOTIC}</svg><span>Rotel Preamp</span></div>
      </div>
      <div class="mdi">
        <div class="win w1">
          <div class="wtitle"><svg class="wicon" width="20" height="20" viewBox="0 0 20 20">${PLOTIC}</svg><div class="wname">Rotel Preamp</div>${winBtns}</div>
          <div class="pane plot"><svg viewBox="12 176 1894 371" preserveAspectRatio="none">${PLOT}</svg></div>
        </div>
        <div class="win w2">
          <div class="wtitle"><svg class="wicon" width="20" height="20" viewBox="0 0 20 20">${TRANS}</svg><div class="wname">Rotel Preamp</div>${winBtns}</div>
          <div class="pane sch"><svg viewBox="12 597 1894 373" preserveAspectRatio="none">${SCHEM}</svg></div>
        </div>
      </div>
      <div class="status"><span>x = 0.000ms</span><span>y = 6.49V</span></div>
      <div class="taskbar">
        <div class="weather">
          <svg width="28" height="28" viewBox="0 0 28 28"><circle cx="20" cy="9" r="6.5" fill="#f0a030"/><path d="M6 27C0 27 0 19 4 18C4 11 13 9 16 14C21 12 28 15 27 21C28 25 26 27 22 27Z" fill="#c6dcf6"/><path d="M3 22C10 24 20 24 27 21C27 25 26 27 22 27H6C4 27 3 25 3 22Z" fill="#a9c6ee"/></svg>
          <div class="wtxt"><span>8°C</span><span>Mostly cloudy</span></div>
        </div>
        <div class="apps">${TASK.map(t => html`<div class="app ${t.run ? "run" : ""}"><svg width="30" height="30" viewBox="0 0 32 32">${t.s}</svg></div>`)}</div>
        <div class="tray">
          <svg class="t-chev" width="16" height="16" viewBox="0 0 16 16"><path d="M2 11L8 5L14 11" fill="none" stroke="#fff" stroke-width="1.6"/></svg>
          <svg class="t-cloud" width="24" height="24" viewBox="0 0 24 24"><path d="M5 19C1 19 1 13 4 12C5 7 11 5 14 8C17 8 20 10 20 13C23 14 22 19 19 19Z" fill="#e4e4e4"/></svg>
          <svg class="t-wifi" width="24" height="24" viewBox="0 0 24 24"><path d="M2 9C8 3 16 3 22 9M5 13C9 9 15 9 19 13M8 16.5C10 15 14 15 16 16.5" fill="none" stroke="#fff" stroke-width="1.5"/><circle cx="12" cy="20" r="1.7" fill="#fff"/></svg>
          <svg class="t-spk" width="20" height="24" viewBox="0 0 20 24"><path d="M2 9H6L11 5V19L6 15H2Z" fill="none" stroke="#fff" stroke-width="1.3"/><path d="M14 8C16 10 16 14 14 16" fill="none" stroke="#ccc" stroke-width="1.2"/><path d="M16.5 5C19.5 9 19.5 15 16.5 19" fill="none" stroke="#666" stroke-width="1.2"/></svg>
          <svg class="t-bat" width="24" height="26" viewBox="0 0 24 26"><rect x="1" y="7" width="22" height="16" rx="3" fill="#a6e2b0" stroke="#fff" stroke-width="1.4"/><path d="M12 1V13M8 9L12 14L16 9" fill="none" stroke="#fff" stroke-width="1.6"/></svg>
          <div class="pct">85%</div>
          <div class="clock"><div>14:33:23</div><div>25/02/2025</div></div>
        </div>
      </div>
    `;
  }
}
